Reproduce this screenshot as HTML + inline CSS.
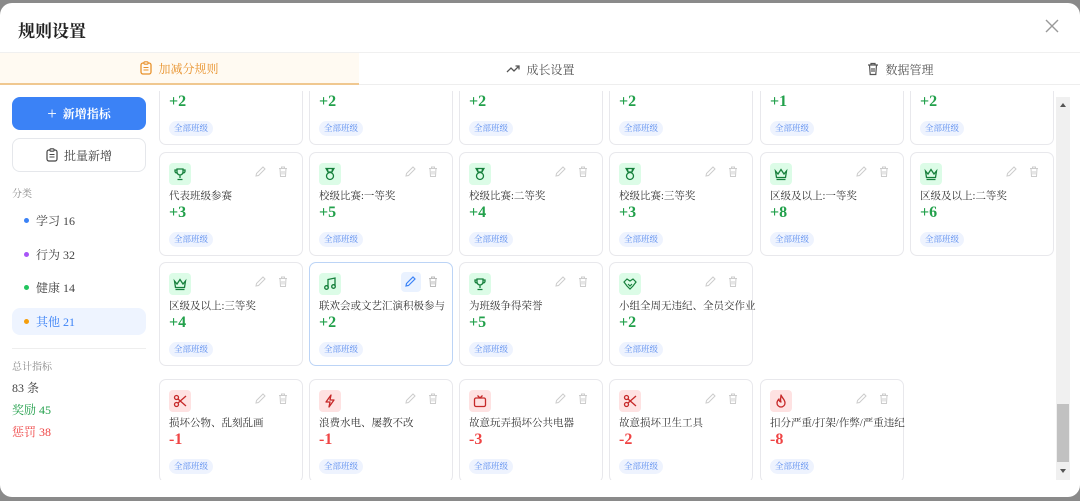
<!DOCTYPE html>
<html><head><meta charset="utf-8"><style>
*{box-sizing:border-box;margin:0;padding:0}
body{width:1080px;height:501px;background:#8a8a8a;font-family:"Liberation Serif","Noto Serif CJK SC",serif;overflow:hidden;position:relative}
.modal{position:absolute;left:0;top:3px;width:1080px;height:494px;background:#fff;border-radius:12px;overflow:hidden}
.title{position:absolute;left:18px;top:14px;font-size:17px;font-weight:bold;color:#222}
.close{position:absolute;left:1045px;top:16px}
.tabs{position:absolute;left:0;top:49px;width:1080px;height:33px;border-top:1px solid #f0f0f0;border-bottom:1px solid #eee}
.tab{position:absolute;top:0;height:32px;width:359px;display:flex;align-items:center;justify-content:center;font-size:12px;color:#555;gap:6px}
.tab.act{background:#fffaf2;color:#e8912a;border-bottom:2px solid #f0c890}
.btn{position:absolute;left:12px;width:134px;height:33px;border-radius:8px;display:flex;align-items:center;justify-content:center;font-size:12px;gap:6px}
.b1{top:94px;background:#3b82f6;color:#fff;font-weight:bold}
.b2{top:135px;border:1px solid #e5e7eb;color:#444;height:34px}
.lbl{position:absolute;left:12px;font-size:10px;color:#888}
.cat{position:absolute;left:12px;width:134px;height:27px;border-radius:8px;display:flex;align-items:center;padding-left:12px;font-size:12px;color:#444;gap:7px}
.cat i{width:5px;height:5px;border-radius:50%;display:inline-block}
.st{position:absolute;left:12px;font-size:12px}
.cards{position:absolute;left:0;top:88px;width:1080px;height:389px;overflow:hidden}
.card{position:absolute;width:144px;height:104px;border:1px solid #e8e8ec;border-radius:7px;background:#fff}
.card.sel{border-color:#bcd4f6}
.ic{position:absolute;left:9px;top:10px;width:22px;height:22px;border-radius:4px;display:flex;align-items:center;justify-content:center}
.g{background:#dcfce7}.r{background:#fee2e2}
.ed{position:absolute;left:95px;top:13px}
.tr{position:absolute;left:118px;top:13px}
.ct{position:absolute;left:9px;top:35px;font-size:10.5px;color:#333;white-space:nowrap}
.cv{position:absolute;left:9px;top:51px;font-size:16px;color:#22a04b;font-weight:bold}
.cv.n{color:#ef4444}
.tg{position:absolute;left:9px;top:79px;height:15px;padding:0 5px;border-radius:8px;background:#eef3fe;color:#5b8def;font-size:8.5px;line-height:15px}
.sb{position:absolute;left:1056px;top:97px;width:14px;height:383px;background:#f0f0f0}
</style></head><body>
<div class="modal">
<div class="title">规则设置</div>
<svg class="close" width="14" height="14" viewBox="0 0 14 14"><path d="M1 1L13 13M13 1L1 13" stroke="#999" stroke-width="1.4"/></svg>
<div class="tabs">
<div class="tab act" style="left:0"><svg width="12" height="14" viewBox="0 0 12 14"><rect x="1" y="2" width="10" height="11" rx="2" fill="none" stroke="#e8912a" stroke-width="1.3"/><rect x="4" y="0.8" width="4" height="2.4" rx="0.8" fill="#fffaf2" stroke="#e8912a" stroke-width="1.1"/><path d="M3.5 6.5h5M3.5 9h5" stroke="#e8912a" stroke-width="1.1"/></svg>加减分规则</div>
<div class="tab" style="left:361px"><svg width="14" height="10" viewBox="0 0 14 10"><path d="M1 8L5 4l3 3 5-5M9.5 2H13v3.5" fill="none" stroke="#555" stroke-width="1.3"/></svg>成长设置</div>
<div class="tab" style="left:721px"><svg width="12" height="14" viewBox="0 0 12 14"><path d="M1 3h10M4 3V1.5h4V3M2.5 3l.7 9.5h5.6L9.5 3M5 6v4M7 6v4" fill="none" stroke="#555" stroke-width="1.2"/></svg>数据管理</div>
</div>
<div class="btn b1"><span style="font-size:17px;font-weight:300">+</span>新增指标</div>
<div class="btn b2"><svg width="12" height="14" viewBox="0 0 12 14"><rect x="1" y="2" width="10" height="11" rx="2" fill="none" stroke="#444" stroke-width="1.2"/><rect x="4" y="0.8" width="4" height="2.4" rx="0.8" fill="#fff" stroke="#444" stroke-width="1.1"/><path d="M3.5 6.5h5M3.5 9h5" stroke="#444" stroke-width="1.1"/></svg>批量新增</div>
<div class="lbl" style="top:182px">分类</div>
<div class="cat" style="top:204px"><i style="background:#3b82f6"></i>学习 16</div>
<div class="cat" style="top:238px"><i style="background:#a855f7"></i>行为 32</div>
<div class="cat" style="top:271px"><i style="background:#22c55e"></i>健康 14</div>
<div class="cat" style="top:305px;background:#eef4ff;color:#3b82f6"><i style="background:#f59e0b"></i>其他 21</div>
<div style="position:absolute;left:12px;top:345px;width:134px;height:1px;background:#eee"></div>
<div class="lbl" style="top:355px">总计指标</div>
<div class="st" style="top:376px;color:#444">83 条</div>
<div class="st" style="top:398px;color:#22a04b">奖励 45</div>
<div class="st" style="top:420px;color:#ef4444">惩罚 38</div>

<div class="cards">
<!-- row0 -->
<div class="card" style="left:159px;top:-50px"><div class="cv">+2</div><div class="tg">全部班级</div></div>
<div class="card" style="left:309px;top:-50px"><div class="cv">+2</div><div class="tg">全部班级</div></div>
<div class="card" style="left:459px;top:-50px"><div class="cv">+2</div><div class="tg">全部班级</div></div>
<div class="card" style="left:609px;top:-50px"><div class="cv">+2</div><div class="tg">全部班级</div></div>
<div class="card" style="left:760px;top:-50px"><div class="cv">+1</div><div class="tg">全部班级</div></div>
<div class="card" style="left:910px;top:-50px"><div class="cv">+2</div><div class="tg">全部班级</div></div>
<!-- row1 -->
<div class="card" style="left:159px;top:61px"><div class="ic g"><svg width="14" height="14" viewBox="0 0 14 14"><path d="M4 2h6v3a3 3 0 0 1-6 0zM4 3H2v1.5A2 2 0 0 0 4 6M10 3h2v1.5A2 2 0 0 1 10 6M7 8v3M4.5 12.5h5" fill="none" stroke="#16803c" stroke-width="1.3"/></svg></div><svg class="ed" width="11" height="11" viewBox="0 0 11 11"><path d="M1 10l.5-2.5L8 1l2 2-6.5 6.5z" fill="none" stroke="#ccc" stroke-width="1"/></svg><svg class="tr" width="10" height="11" viewBox="0 0 10 11"><path d="M1 2.5h8M3.5 2.5V1h3v1.5M2 2.5l.5 8h5l.5-8M4 5v3.5M6 5v3.5" fill="none" stroke="#ccc" stroke-width="1"/></svg><div class="ct">代表班级参赛</div><div class="cv">+3</div><div class="tg">全部班级</div></div>
<div class="card" style="left:309px;top:61px"><div class="ic g"><svg width="14" height="14" viewBox="0 0 14 14"><path d="M3 1.5h8L9 5H5zM5 5l-.5-3.5M9 5l.5-3.5" fill="none" stroke="#16803c" stroke-width="1.2"/><circle cx="7" cy="9" r="3.5" fill="none" stroke="#16803c" stroke-width="1.3"/></svg></div><svg class="ed" width="11" height="11" viewBox="0 0 11 11"><path d="M1 10l.5-2.5L8 1l2 2-6.5 6.5z" fill="none" stroke="#ccc" stroke-width="1"/></svg><svg class="tr" width="10" height="11" viewBox="0 0 10 11"><path d="M1 2.5h8M3.5 2.5V1h3v1.5M2 2.5l.5 8h5l.5-8M4 5v3.5M6 5v3.5" fill="none" stroke="#ccc" stroke-width="1"/></svg><div class="ct">校级比赛:一等奖</div><div class="cv">+5</div><div class="tg">全部班级</div></div>
<div class="card" style="left:459px;top:61px"><div class="ic g"><svg width="14" height="14" viewBox="0 0 14 14"><path d="M3 1.5h8L9 5H5zM5 5l-.5-3.5M9 5l.5-3.5" fill="none" stroke="#16803c" stroke-width="1.2"/><circle cx="7" cy="9" r="3.5" fill="none" stroke="#16803c" stroke-width="1.3"/></svg></div><svg class="ed" width="11" height="11" viewBox="0 0 11 11"><path d="M1 10l.5-2.5L8 1l2 2-6.5 6.5z" fill="none" stroke="#ccc" stroke-width="1"/></svg><svg class="tr" width="10" height="11" viewBox="0 0 10 11"><path d="M1 2.5h8M3.5 2.5V1h3v1.5M2 2.5l.5 8h5l.5-8M4 5v3.5M6 5v3.5" fill="none" stroke="#ccc" stroke-width="1"/></svg><div class="ct">校级比赛:二等奖</div><div class="cv">+4</div><div class="tg">全部班级</div></div>
<div class="card" style="left:609px;top:61px"><div class="ic g"><svg width="14" height="14" viewBox="0 0 14 14"><path d="M3 1.5h8L9 5H5zM5 5l-.5-3.5M9 5l.5-3.5" fill="none" stroke="#16803c" stroke-width="1.2"/><circle cx="7" cy="9" r="3.5" fill="none" stroke="#16803c" stroke-width="1.3"/></svg></div><svg class="ed" width="11" height="11" viewBox="0 0 11 11"><path d="M1 10l.5-2.5L8 1l2 2-6.5 6.5z" fill="none" stroke="#ccc" stroke-width="1"/></svg><svg class="tr" width="10" height="11" viewBox="0 0 10 11"><path d="M1 2.5h8M3.5 2.5V1h3v1.5M2 2.5l.5 8h5l.5-8M4 5v3.5M6 5v3.5" fill="none" stroke="#ccc" stroke-width="1"/></svg><div class="ct">校级比赛:三等奖</div><div class="cv">+3</div><div class="tg">全部班级</div></div>
<div class="card" style="left:760px;top:61px"><div class="ic g"><svg width="14" height="14" viewBox="0 0 14 14"><path d="M1.5 4l2.5 3L7 2.5 10 7l2.5-3-1 6.5h-9zM2.5 12.5h9" fill="none" stroke="#16803c" stroke-width="1.3"/></svg></div><svg class="ed" width="11" height="11" viewBox="0 0 11 11"><path d="M1 10l.5-2.5L8 1l2 2-6.5 6.5z" fill="none" stroke="#ccc" stroke-width="1"/></svg><svg class="tr" width="10" height="11" viewBox="0 0 10 11"><path d="M1 2.5h8M3.5 2.5V1h3v1.5M2 2.5l.5 8h5l.5-8M4 5v3.5M6 5v3.5" fill="none" stroke="#ccc" stroke-width="1"/></svg><div class="ct">区级及以上:一等奖</div><div class="cv">+8</div><div class="tg">全部班级</div></div>
<div class="card" style="left:910px;top:61px"><div class="ic g"><svg width="14" height="14" viewBox="0 0 14 14"><path d="M1.5 4l2.5 3L7 2.5 10 7l2.5-3-1 6.5h-9zM2.5 12.5h9" fill="none" stroke="#16803c" stroke-width="1.3"/></svg></div><svg class="ed" width="11" height="11" viewBox="0 0 11 11"><path d="M1 10l.5-2.5L8 1l2 2-6.5 6.5z" fill="none" stroke="#ccc" stroke-width="1"/></svg><svg class="tr" width="10" height="11" viewBox="0 0 10 11"><path d="M1 2.5h8M3.5 2.5V1h3v1.5M2 2.5l.5 8h5l.5-8M4 5v3.5M6 5v3.5" fill="none" stroke="#ccc" stroke-width="1"/></svg><div class="ct">区级及以上:二等奖</div><div class="cv">+6</div><div class="tg">全部班级</div></div>
<!-- row2 -->
<div class="card" style="left:159px;top:171px"><div class="ic g"><svg width="14" height="14" viewBox="0 0 14 14"><path d="M1.5 4l2.5 3L7 2.5 10 7l2.5-3-1 6.5h-9zM2.5 12.5h9" fill="none" stroke="#16803c" stroke-width="1.3"/></svg></div><svg class="ed" width="11" height="11" viewBox="0 0 11 11"><path d="M1 10l.5-2.5L8 1l2 2-6.5 6.5z" fill="none" stroke="#ccc" stroke-width="1"/></svg><svg class="tr" width="10" height="11" viewBox="0 0 10 11"><path d="M1 2.5h8M3.5 2.5V1h3v1.5M2 2.5l.5 8h5l.5-8M4 5v3.5M6 5v3.5" fill="none" stroke="#ccc" stroke-width="1"/></svg><div class="ct">区级及以上:三等奖</div><div class="cv">+4</div><div class="tg">全部班级</div></div>
<div class="card sel" style="left:309px;top:171px"><div class="ic g"><svg width="14" height="14" viewBox="0 0 14 14"><path d="M5 10.5V2.5l7-1.5v8" fill="none" stroke="#16803c" stroke-width="1.3"/><circle cx="3.5" cy="10.5" r="1.8" fill="none" stroke="#16803c" stroke-width="1.3"/><circle cx="10.5" cy="9.5" r="1.8" fill="none" stroke="#16803c" stroke-width="1.3"/></svg></div><div style="position:absolute;left:91px;top:9px;width:20px;height:20px;border-radius:4px;background:#eaf2ff"></div><svg class="ed" width="11" height="11" viewBox="0 0 11 11"><path d="M1 10l.5-2.5L8 1l2 2-6.5 6.5z" fill="none" stroke="#3b82f6" stroke-width="1.2"/></svg><svg class="tr" width="10" height="11" viewBox="0 0 10 11"><path d="M1 2.5h8M3.5 2.5V1h3v1.5M2 2.5l.5 8h5l.5-8M4 5v3.5M6 5v3.5" fill="none" stroke="#bbb" stroke-width="1"/></svg><div class="ct">联欢会或文艺汇演积极参与</div><div class="cv">+2</div><div class="tg">全部班级</div></div>
<div class="card" style="left:459px;top:171px"><div class="ic g"><svg width="14" height="14" viewBox="0 0 14 14"><path d="M4 2h6v3a3 3 0 0 1-6 0zM4 3H2v1.5A2 2 0 0 0 4 6M10 3h2v1.5A2 2 0 0 1 10 6M7 8v3M4.5 12.5h5" fill="none" stroke="#16803c" stroke-width="1.3"/></svg></div><svg class="ed" width="11" height="11" viewBox="0 0 11 11"><path d="M1 10l.5-2.5L8 1l2 2-6.5 6.5z" fill="none" stroke="#ccc" stroke-width="1"/></svg><svg class="tr" width="10" height="11" viewBox="0 0 10 11"><path d="M1 2.5h8M3.5 2.5V1h3v1.5M2 2.5l.5 8h5l.5-8M4 5v3.5M6 5v3.5" fill="none" stroke="#ccc" stroke-width="1"/></svg><div class="ct">为班级争得荣誉</div><div class="cv">+5</div><div class="tg">全部班级</div></div>
<div class="card" style="left:609px;top:171px"><div class="ic g"><svg width="14" height="14" viewBox="0 0 14 14"><path d="M1 5l3-3 3 2 3-2 3 3-3 4-3 3-3-3zM5 7l2 2 2-2" fill="none" stroke="#16803c" stroke-width="1.2"/></svg></div><svg class="ed" width="11" height="11" viewBox="0 0 11 11"><path d="M1 10l.5-2.5L8 1l2 2-6.5 6.5z" fill="none" stroke="#ccc" stroke-width="1"/></svg><svg class="tr" width="10" height="11" viewBox="0 0 10 11"><path d="M1 2.5h8M3.5 2.5V1h3v1.5M2 2.5l.5 8h5l.5-8M4 5v3.5M6 5v3.5" fill="none" stroke="#ccc" stroke-width="1"/></svg><div class="ct">小组全周无违纪、全员交作业</div><div class="cv">+2</div><div class="tg">全部班级</div></div>
<!-- row3 -->
<div class="card" style="left:159px;top:288px"><div class="ic r"><svg width="14" height="14" viewBox="0 0 14 14"><circle cx="3.5" cy="3.5" r="2" fill="none" stroke="#c62828" stroke-width="1.3"/><circle cx="3.5" cy="10.5" r="2" fill="none" stroke="#c62828" stroke-width="1.3"/><path d="M5 5l8 7M5 9l8-7" stroke="#c62828" stroke-width="1.3"/></svg></div><svg class="ed" width="11" height="11" viewBox="0 0 11 11"><path d="M1 10l.5-2.5L8 1l2 2-6.5 6.5z" fill="none" stroke="#ccc" stroke-width="1"/></svg><svg class="tr" width="10" height="11" viewBox="0 0 10 11"><path d="M1 2.5h8M3.5 2.5V1h3v1.5M2 2.5l.5 8h5l.5-8M4 5v3.5M6 5v3.5" fill="none" stroke="#ccc" stroke-width="1"/></svg><div class="ct">损坏公物、乱刻乱画</div><div class="cv n">-1</div><div class="tg">全部班级</div></div>
<div class="card" style="left:309px;top:288px"><div class="ic r"><svg width="14" height="14" viewBox="0 0 14 14"><path d="M8 1L3 8h4l-1 5 5-7H7z" fill="none" stroke="#c62828" stroke-width="1.3" stroke-linejoin="round"/></svg></div><svg class="ed" width="11" height="11" viewBox="0 0 11 11"><path d="M1 10l.5-2.5L8 1l2 2-6.5 6.5z" fill="none" stroke="#ccc" stroke-width="1"/></svg><svg class="tr" width="10" height="11" viewBox="0 0 10 11"><path d="M1 2.5h8M3.5 2.5V1h3v1.5M2 2.5l.5 8h5l.5-8M4 5v3.5M6 5v3.5" fill="none" stroke="#ccc" stroke-width="1"/></svg><div class="ct">浪费水电、屡教不改</div><div class="cv n">-1</div><div class="tg">全部班级</div></div>
<div class="card" style="left:459px;top:288px"><div class="ic r"><svg width="14" height="14" viewBox="0 0 14 14"><rect x="1.5" y="4" width="11" height="8.5" rx="1.5" fill="none" stroke="#c62828" stroke-width="1.3"/><path d="M4.5 1.5L7 4l2.5-2.5" fill="none" stroke="#c62828" stroke-width="1.3"/></svg></div><svg class="ed" width="11" height="11" viewBox="0 0 11 11"><path d="M1 10l.5-2.5L8 1l2 2-6.5 6.5z" fill="none" stroke="#ccc" stroke-width="1"/></svg><svg class="tr" width="10" height="11" viewBox="0 0 10 11"><path d="M1 2.5h8M3.5 2.5V1h3v1.5M2 2.5l.5 8h5l.5-8M4 5v3.5M6 5v3.5" fill="none" stroke="#ccc" stroke-width="1"/></svg><div class="ct">故意玩弄损坏公共电器</div><div class="cv n">-3</div><div class="tg">全部班级</div></div>
<div class="card" style="left:609px;top:288px"><div class="ic r"><svg width="14" height="14" viewBox="0 0 14 14"><circle cx="3.5" cy="3.5" r="2" fill="none" stroke="#c62828" stroke-width="1.3"/><circle cx="3.5" cy="10.5" r="2" fill="none" stroke="#c62828" stroke-width="1.3"/><path d="M5 5l8 7M5 9l8-7" stroke="#c62828" stroke-width="1.3"/></svg></div><svg class="ed" width="11" height="11" viewBox="0 0 11 11"><path d="M1 10l.5-2.5L8 1l2 2-6.5 6.5z" fill="none" stroke="#ccc" stroke-width="1"/></svg><svg class="tr" width="10" height="11" viewBox="0 0 10 11"><path d="M1 2.5h8M3.5 2.5V1h3v1.5M2 2.5l.5 8h5l.5-8M4 5v3.5M6 5v3.5" fill="none" stroke="#ccc" stroke-width="1"/></svg><div class="ct">故意损坏卫生工具</div><div class="cv n">-2</div><div class="tg">全部班级</div></div>
<div class="card" style="left:760px;top:288px"><div class="ic r"><svg width="14" height="14" viewBox="0 0 14 14"><path d="M7 1c1 3 4 4.5 4 8a4 4 0 0 1-8 0c0-2 1-3 2-4 0 2 1 3 2 3-1-2 0-5 0-7z" fill="none" stroke="#c62828" stroke-width="1.3" stroke-linejoin="round"/></svg></div><svg class="ed" width="11" height="11" viewBox="0 0 11 11"><path d="M1 10l.5-2.5L8 1l2 2-6.5 6.5z" fill="none" stroke="#ccc" stroke-width="1"/></svg><svg class="tr" width="10" height="11" viewBox="0 0 10 11"><path d="M1 2.5h8M3.5 2.5V1h3v1.5M2 2.5l.5 8h5l.5-8M4 5v3.5M6 5v3.5" fill="none" stroke="#ccc" stroke-width="1"/></svg><div class="ct">扣分严重/打架/作弊/严重违纪</div><div class="cv n">-8</div><div class="tg">全部班级</div></div>
</div>
<div class="sb" style="top:94px"><div style="position:absolute;left:4px;top:6px;width:0;height:0;border-left:3px solid transparent;border-right:3px solid transparent;border-bottom:4px solid #555"></div><div style="position:absolute;left:1px;top:307px;width:12px;height:58px;background:#c1c1c1"></div><div style="position:absolute;left:4px;top:372px;width:0;height:0;border-left:3px solid transparent;border-right:3px solid transparent;border-top:4px solid #555"></div></div>
</div>
</body></html>
